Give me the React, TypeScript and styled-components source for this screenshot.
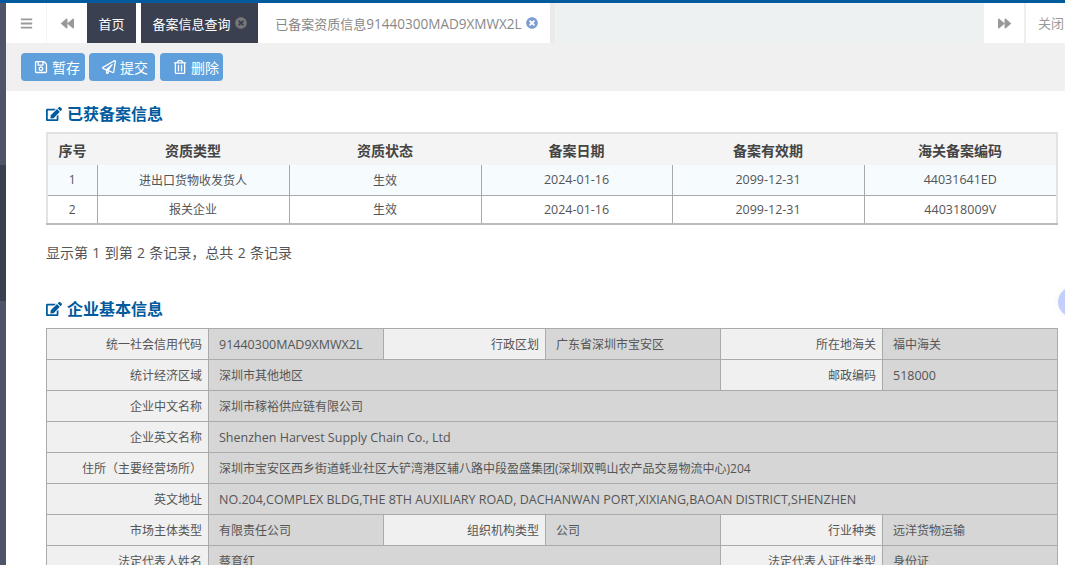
import styled, { createGlobalStyle } from "styled-components"
import { FaBars, FaBackward, FaForward, FaRegSave, FaRegPaperPlane, FaRegTrashAlt, FaEdit, FaTimesCircle } from "react-icons/fa"

const GlobalStyle = createGlobalStyle`
    html, body {
        margin: 0;
        height: 100%;
        overflow: hidden;
        background: #fff;
    }
    * { box-sizing: border-box; }
    body {
        font-family: "Open Sans", "Noto Sans CJK SC", sans-serif;
        font-size: 12px;
        color: #555;
    }
`

const Page = styled.div`
    height: 565px;
    overflow: hidden;
    display: flex;
    position: relative;
    border-top: 3px solid #005a9e;
`
const SideEdge = styled.div`
    width: 6px;
    flex: none;
    padding-top: 162px;
    background: #4f5469;
`
const SideEdgeActive = styled.div`
    height: 136px;
    background: #3a4050;
`
const Main = styled.div`
    flex: 1;
    min-width: 0;
`
const TabBar = styled.div`
    height: 40px;
    display: flex;
    background: #eef1f2;
`
const IconTab = styled.div<{ $wide?: boolean }>`
    width: ${p => (p.$wide ? 41 : 40)}px;
    flex: none;
    background: #fff;
    color: #999;
    display: flex;
    align-items: center;
    justify-content: center;
    font-size: 13px;
    border-right: ${p => (p.$wide ? "1px solid #f3f3f3" : "none")};
`
const Tab = styled.div<{ $dark?: boolean; $width: number }>`
    width: ${p => p.$width}px;
    flex: none;
    display: flex;
    align-items: center;
    justify-content: center;
    gap: 4px;
    font-size: 13px;
    background: ${p => (p.$dark ? "#3a4050" : "#fff")};
    color: ${p => (p.$dark ? "#fff" : "#888")};
`
const TabGap = styled.div<{ $color?: string }>`
    width: 5px;
    flex: none;
    background: ${p => p.$color ?? "#fff"};
`
const Spacer = styled.div`
    flex: 1;
`
const CloseTab = styled.div`
    width: 41px;
    flex: none;
    background: #fff;
    border-left: 2px solid #eee;
    color: #999;
    font-size: 13px;
    padding-left: 12px;
    white-space: nowrap;
    line-height: 40px;
`
const Toolbar = styled.div`
    height: 48px;
    background: #f0f0f0;
    display: flex;
    align-items: center;
    padding-left: 15px;
    gap: 4px;
`
const ActionButton = styled.div<{ $width: number }>`
    width: ${p => p.$width}px;
    height: 28px;
    padding-left: 13px;
    border-radius: 4px;
    background: #5f9fdc;
    color: #fff;
    font-size: 14px;
    display: flex;
    align-items: center;
    gap: 4px;
    &:last-child {
        margin-left: 1px;
    }
`
const Content = styled.div`
    padding: 11px 8px 0 40px;
`
const SectionTitle = styled.h3`
    margin: 0;
    height: 24px;
    display: flex;
    align-items: center;
    gap: 5px;
    font-size: 16px;
    font-weight: 700;
    line-height: 24px;
    color: #005a9e;
`
const Latin = styled.span`
    font-size: 1.042em;
`
const RecordTable = styled.table`
    width: 1010px;
    margin-top: 6px;
    border-collapse: collapse;
    table-layout: fixed;
    border: 2px solid #e2e2e2;
    border-bottom-color: #bbb;
    text-align: center;
    th {
        height: 32px;
        padding: 0;
        background: #f4f4f4;
        font-size: 14px;
        color: #444;
    }
    td {
        height: 30px;
        padding: 0;
        border: 1px solid #aaa;
        color: #555;
    }
    td:first-child { border-left: none; }
    td:last-child { border-right: none; }
    tr:last-child td {
        height: 29px;
        border-bottom: none;
    }
    tbody tr:first-child { background: #f6fbfe; }
    tbody tr:first-child td { border-top: none; }
`
const Summary = styled.p`
    margin: 18px 0 0;
    height: 20px;
    line-height: 20px;
    font-size: 14px;
    word-spacing: 0.7px;
    color: #555;
`
const InfoTitle = styled(SectionTitle)`
    margin-top: 34px;
`
const InfoTable = styled.table`
    width: 1011px;
    margin-top: 7px;
    border-collapse: collapse;
    table-layout: fixed;
    border: 1px solid #aaa;
    td {
        height: 31px;
        border: 1px solid #aaa;
        white-space: nowrap;
        overflow: hidden;
    }
`
const LabelCell = styled.td`
    background: #f0f0f0;
    text-align: right;
    padding: 0 6px 0 0;
    color: #555;
`
const ValueCell = styled.td`
    background: #d6d6d6;
    padding: 0 0 0 10px;
    color: #555;
`
const FloatingDot = styled.div`
    position: absolute;
    right: -23px;
    top: 284px;
    width: 30px;
    height: 30px;
    border-radius: 50%;
    background: #c3d0fb;
    box-shadow: 0 0 8px rgba(0, 0, 0, 0.05);
`

const records = [
    ["1", "进出口货物收发货人", "生效", "2024-01-16", "2099-12-31", "44031641ED"],
    ["2", "报关企业", "生效", "2024-01-16", "2099-12-31", "440318009V"],
]
const recordHeads = ["序号", "资质类型", "资质状态", "备案日期", "备案有效期", "海关备案编码"]
const recordCols = [50, 192, 192, 191, 192, 193]

const infoCols = [162, 175, 162, 175, 162, 175]

export default function App() {
    return (
        <Page>
            <GlobalStyle />
            <SideEdge><SideEdgeActive /></SideEdge>
            <Main>
                <TabBar>
                    <IconTab $wide><FaBars /></IconTab>
                    <IconTab><FaBackward /></IconTab>
                    <Tab $dark $width={49}>首页</Tab>
                    <TabGap />
                    <Tab $dark $width={117}>备案信息查询 <FaTimesCircle color="#777" size={12} /></Tab>
                    <TabGap />
                    <Tab $width={287}>
                        <span>已备案资质信息<Latin>91440300MAD9XMWX2L</Latin></span>
                        <FaTimesCircle color="#7d9dd0" size={12} />
                    </Tab>
                    <TabGap $color="#eaeaea" />
                    <Spacer />
                    <IconTab><FaForward /></IconTab>
                    <CloseTab>关闭</CloseTab>
                </TabBar>
                <Toolbar>
                    <ActionButton $width={64}><FaRegSave />暂存</ActionButton>
                    <ActionButton $width={66}><FaRegPaperPlane />提交</ActionButton>
                    <ActionButton $width={63}><FaRegTrashAlt />删除</ActionButton>
                </Toolbar>
                <Content>
                    <SectionTitle><FaEdit />已获备案信息</SectionTitle>
                    <RecordTable>
                        <colgroup>
                            {recordCols.map((w, i) => <col key={i} style={{ width: w }} />)}
                        </colgroup>
                        <thead>
                            <tr>{recordHeads.map(h => <th key={h}>{h}</th>)}</tr>
                        </thead>
                        <tbody>
                            {records.map(row => (
                                <tr key={row[0]}>
                                    {row.map((c, i) => <td key={i}>{i > 2 ? <Latin>{c}</Latin> : c}</td>)}
                                </tr>
                            ))}
                        </tbody>
                    </RecordTable>
                    <Summary>显示第 1 到第 2 条记录，总共 2 条记录</Summary>
                    <InfoTitle><FaEdit />企业基本信息</InfoTitle>
                    <InfoTable>
                        <colgroup>
                            {infoCols.map((w, i) => <col key={i} style={{ width: w }} />)}
                        </colgroup>
                        <tbody>
                            <tr>
                                <LabelCell>统一社会信用代码</LabelCell>
                                <ValueCell><Latin>91440300MAD9XMWX2L</Latin></ValueCell>
                                <LabelCell>行政区划</LabelCell>
                                <ValueCell>广东省深圳市宝安区</ValueCell>
                                <LabelCell>所在地海关</LabelCell>
                                <ValueCell>福中海关</ValueCell>
                            </tr>
                            <tr>
                                <LabelCell>统计经济区域</LabelCell>
                                <ValueCell colSpan={3}>深圳市其他地区</ValueCell>
                                <LabelCell>邮政编码</LabelCell>
                                <ValueCell><Latin>518000</Latin></ValueCell>
                            </tr>
                            <tr>
                                <LabelCell>企业中文名称</LabelCell>
                                <ValueCell colSpan={5}>深圳市稼裕供应链有限公司</ValueCell>
                            </tr>
                            <tr>
                                <LabelCell>企业英文名称</LabelCell>
                                <ValueCell colSpan={5}><Latin>Shenzhen Harvest Supply Chain Co., Ltd</Latin></ValueCell>
                            </tr>
                            <tr>
                                <LabelCell>住所（主要经营场所）</LabelCell>
                                <ValueCell colSpan={5}>深圳市宝安区西乡街道蚝业社区大铲湾港区辅八路中段盈盛集团(深圳双鸭山农产品交易物流中心)204</ValueCell>
                            </tr>
                            <tr>
                                <LabelCell>英文地址</LabelCell>
                                <ValueCell colSpan={5}><Latin>NO.204,COMPLEX BLDG,THE 8TH AUXILIARY ROAD, DACHANWAN PORT,XIXIANG,BAOAN DISTRICT,SHENZHEN</Latin></ValueCell>
                            </tr>
                            <tr>
                                <LabelCell>市场主体类型</LabelCell>
                                <ValueCell>有限责任公司</ValueCell>
                                <LabelCell>组织机构类型</LabelCell>
                                <ValueCell>公司</ValueCell>
                                <LabelCell>行业种类</LabelCell>
                                <ValueCell>远洋货物运输</ValueCell>
                            </tr>
                            <tr>
                                <LabelCell>法定代表人姓名</LabelCell>
                                <ValueCell colSpan={3}>蔡育红</ValueCell>
                                <LabelCell>法定代表人证件类型</LabelCell>
                                <ValueCell>身份证</ValueCell>
                            </tr>
                        </tbody>
                    </InfoTable>
                </Content>
            </Main>
            <FloatingDot />
        </Page>
    )
}
